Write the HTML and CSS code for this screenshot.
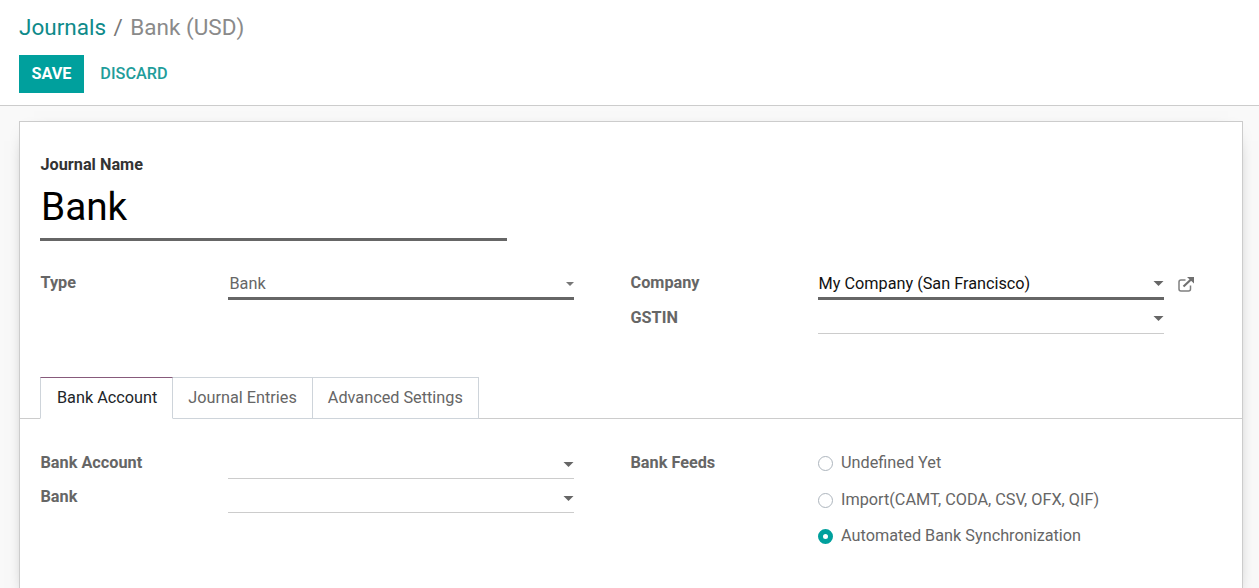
FILE: index.html
```html
<!DOCTYPE html>
<html lang="en">
<head>
<meta charset="utf-8">
<title>Journals / Bank (USD)</title>
<link rel="stylesheet" href="styles.css">
</head>
<body>
<header class="panel">
  <nav class="crumbs"><a class="crumb-link">Journals</a><span class="crumb-sep">/</span><span class="crumb-cur">Bank (USD)</span></nav>
  <div class="actions"><button class="btn-save">SAVE</button><button class="btn-discard">DISCARD</button></div>
</header>
<main class="sheet-wrap">
  <section class="sheet">
    <div class="head">
      <label class="name-label">Journal Name</label>
      <div class="name-input">Bank</div>
    </div>
    <div class="cols top-cols">
      <div class="col">
        <div class="row tall"><label class="lbl">Type</label>
          <div class="field active muted">Bank<svg class="caret small" viewBox="0 0 8 4"><path d="M0 0h8L4 4z"/></svg></div></div>
      </div>
      <div class="col">
        <div class="row tall"><label class="lbl">Company</label>
          <div class="field active dark">My Company (San Francisco)<svg class="caret" viewBox="0 0 10 5"><path d="M0 0h10L5 5z"/></svg>
            <svg class="ext" viewBox="0 0 16 15"><path d="M12.500 8.500V12a2 2 0 0 1-2 2H3a2 2 0 0 1-2-2V5a2 2 0 0 1 2-2h4.500" fill="none" stroke="#808080" stroke-width="1.500"/><path d="M5.500 9.500 13.500 2" fill="none" stroke="#707070" stroke-width="2.200"/><path d="M9 0h7v6.500z" fill="#707070"/></svg></div></div>
        <div class="row"><label class="lbl">GSTIN</label>
          <div class="field"><svg class="caret" viewBox="0 0 10 5"><path d="M0 0h10L5 5z"/></svg></div></div>
      </div>
    </div>
    <ul class="tabs">
      <li class="tab current">Bank Account</li>
      <li class="tab">Journal Entries</li>
      <li class="tab">Advanced Settings</li>
    </ul>
    <div class="cols tab-cols">
      <div class="col">
        <div class="row"><label class="lbl">Bank Account</label>
          <div class="field"><svg class="caret" viewBox="0 0 10 5"><path d="M0 0h10L5 5z"/></svg></div></div>
        <div class="row"><label class="lbl">Bank</label>
          <div class="field"><svg class="caret" viewBox="0 0 10 5"><path d="M0 0h10L5 5z"/></svg></div></div>
      </div>
      <div class="col">
        <div class="row"><label class="lbl">Bank Feeds</label>
          <div class="radios">
            <div class="radio-row"><span class="radio"></span>Undefined Yet</div>
            <div class="radio-row"><span class="radio"></span>Import(CAMT, CODA, CSV, OFX, QIF)</div>
            <div class="radio-row"><span class="radio on"></span>Automated Bank Synchronization</div>
          </div></div>
      </div>
    </div>
  </section>
</main>
</body>
</html>
```

FILE: styles.css
```css
* { box-sizing: border-box; }
html, body { margin: 0; height: 100%; overflow: hidden; }
body { font-family: Roboto, "Noto Sans", sans-serif; font-size: 16.25px; color: #666; background: #f9f9f9; }
.panel { height: 106px; padding: 10px 19px 0; background: #fff; border-bottom: 1px solid #ccc; }
.crumbs { display: flex; height: 34px; align-items: center; font-size: 22.5px; line-height: 34px; }
.crumb-link { color: #0e8a8a; }
.crumb-sep { margin: 0 7.500px; color: #777; }
.crumb-cur { color: #8a8a8a; }
.actions { display: flex; margin-top: 11px; }
.btn-save, .btn-discard { border: 0; font-family: inherit; font-size: 16.25px; height: 38px; padding: 0 0 2px; }
.btn-save { width: 65px; background: #00a09d; color: #fff; font-weight: 700; }
.btn-discard { width: 100px; background: none; color: #1f9d9b; font-weight: 500; }
.sheet-wrap { padding: 15px 16px 0 19px; }
.sheet { height: 480px; background: #fff; border: 1px solid #ccc; box-shadow: 0 5px 20px -15px #000; padding: 33px 0 0; }
.head { padding: 0 20px; }
.name-label { display: block; padding-left: .5px; font-weight: 700; color: #333; line-height: 19px; }
.name-input { width: 467px; height: 66px; margin-top: 1px; padding-left: 1px; border-bottom: 3px solid #666; font-size: 38.75px; line-height: 64px; color: #000; }
.cols { display: flex; padding: 0 20px; }
.top-cols { margin-top: 30px; height: 106px; }
.tab-cols { margin-top: 32px; }
.col { width: 590px; }
.row { display: flex; min-height: 34px; }
.row.tall { min-height: 35px; }
.lbl { width: 188px; padding-left: .5px; font-weight: 700; line-height: 24px; color: #666; flex: none; }
.field { position: relative; width: 346px; height: 28px; padding: 1px 1.500px 0; line-height: 23px; border-bottom: 1px solid #ccc; }
.field.active { height: 29px; border-bottom: 3px solid #666; }
.muted { color: #666; }
.dark { color: #111; padding-left: .5px; }
.caret { position: absolute; right: 0; top: 10px; width: 11px; height: 5px; fill: #666; }
.tab-cols .caret { top: 11px; }
.caret.small { width: 8px; height: 4px; right: 0; top: 11px; fill: #777; }
.ext { position: absolute; left: 360px; top: 6px; width: 16px; height: 15px; }
.tabs { display: flex; list-style: none; margin: 0; padding: 0 20px; height: 42px; border-bottom: 1px solid #ccc; }
.tab { height: 42px; padding: 0 15px; line-height: 40px; border: 1px solid #ced4da; border-left: 0; color: #666; }
.tab.current { padding: 0 15px 0 16px; border-left: 1px solid #ced4da; border-top-color: #875a7b; border-bottom-color: #fff; color: #212529; }
.radios { display: flex; flex-direction: column; margin-top: -1px; }
.radio-row { display: flex; align-items: center; height: 24px; gap: 8px; color: #666; }
.radio-row:nth-child(2) { margin: 13px 0 12px; }
.radio { width: 15px; height: 15px; margin-top: 2px; border-radius: 50%; border: 1px solid #adb5bd; background: #fff; flex: none; }
.radio.on { border: 5px solid #00a09d; }
```
